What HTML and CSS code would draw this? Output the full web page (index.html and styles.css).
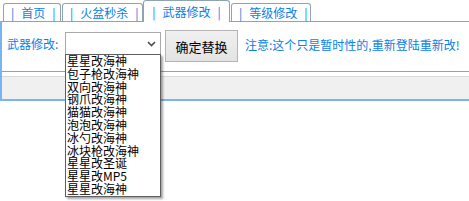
FILE: index.html
```html
<!DOCTYPE html>
<html lang="zh">
<head>
    <meta charset="UTF-8">
    <title>武器修改</title>
    <link rel="stylesheet" href="styles.css">
</head>
<body>
    <div class="tabs">
        <div class="tab tab-1"><span class="bar">|</span>首页<span class="bar">|</span></div>
        <div class="tab tab-2"><span class="bar">|</span>火盆秒杀<span class="bar">|</span></div>
        <div class="tab tab-3 active"><span class="bar">|</span>武器修改<span class="bar">|</span></div>
        <div class="tab tab-4"><span class="bar">|</span>等级修改<span class="bar">|</span></div>
    </div>

    <div class="panel">
        <div class="form-row">
            <label class="field-label">武器修改:</label>
            <div class="select-wrap">
                <div class="select">
                    <svg class="chevron" width="9" height="6" viewBox="0 0 9 6">
                        <path d="M1 1 L4.5 4.5 L8 1" fill="none" stroke="#4d4d4d" stroke-width="1.6"/>
                    </svg>
                </div>
                <ul class="dropdown">
                    <li>星星改海神</li>
                    <li>包子枪改海神</li>
                    <li>双向改海神</li>
                    <li>钢爪改海神</li>
                    <li>猫猫改海神</li>
                    <li>泡泡改海神</li>
                    <li>冰勺改海神</li>
                    <li>冰块枪改海神</li>
                    <li>星星改圣诞</li>
                    <li>星星改MP5</li>
                    <li>星星改海神</li>
                </ul>
            </div>
            <button class="btn">确定替换</button>
            <span class="note">注意:这个只是暂时性的,重新登陆重新改!</span>
        </div>
        <div class="footer">
            <div class="footer-bar"></div>
        </div>
    </div>
</body>
</html>
```

FILE: styles.css
```css
* {
    margin: 0;
    padding: 0;
    box-sizing: border-box;
    font-family: 'Noto Sans CJK SC', 'Liberation Sans', sans-serif;
}

:root {
    --blue-text: #0a7fe6;
    --tab-line: #8fa4b1;
    --panel-blue: #78b4f0;
}

html, body {
    min-height: 100vh;
}

body {
    background: #ffffff;
    font-size: 12px;
}

/* 选项卡 */
.tabs {
    display: flex;
    align-items: flex-end;
    height: 21px;
    padding-left: 3px;
    gap: 1px;
}

.tab {
    height: 18px;
    border: 1px solid var(--tab-line);
    border-bottom: none;
    border-radius: 3px 3px 0 0;
    color: var(--blue-text);
    font-size: 12px;
    line-height: 17px;
    text-align: center;
    white-space: nowrap;
    background: #ffffff;
}

.tab .bar {
    margin: 0 7px;
}

.tab-1 { width: 58px; }
.tab-2 { width: 81px; }
.tab-3 { width: 87px; margin-left: -1px; }
.tab-4 { width: 80px; }

.tab.active {
    height: 22px;
    margin-bottom: -1px;
    line-height: 21px;
    position: relative;
    z-index: 1;
}

/* 主面板 */
.panel {
    border-top: 1px solid var(--tab-line);
    border-left: 2px solid var(--panel-blue);
    border-bottom: 2px solid var(--panel-blue);
}

.form-row {
    display: flex;
    align-items: flex-start;
    height: 50px;
    padding: 8px 0 0 5px;
    border-bottom: 1px solid var(--tab-line);
}

.field-label {
    color: var(--blue-text);
    font-size: 12px;
    line-height: 16px;
    margin-top: 6px;
    width: 58px;
}

.select-wrap {
    position: relative;
    margin-top: 2px;
}

.select {
    width: 96px;
    height: 23px;
    border: 1px solid #a9a9a9;
    background: #ffffff;
    display: flex;
    align-items: center;
    justify-content: flex-end;
    padding-right: 4px;
}

.chevron {
    display: block;
}

/* 展开的下拉列表 */
.dropdown {
    position: absolute;
    top: 22px;
    left: 0;
    width: 96px;
    list-style: none;
    background: #ffffff;
    border: 1px solid #5e5e5e;
    box-shadow: 2px 2px 2px rgba(0, 0, 0, 0.35);
    z-index: 5;
}

.dropdown li {
    font-size: 12px;
    line-height: 12.8px;
    height: 12.8px;
    padding-left: 1px;
    color: #000000;
    white-space: nowrap;
}

.btn {
    width: 73px;
    height: 32px;
    margin-left: 4px;
    border: 1px solid #b4b4b4;
    background: linear-gradient(#f0f0f0, #e3e3e3);
    color: #000000;
    font-size: 13px;
}

.note {
    color: var(--blue-text);
    font-size: 12px;
    line-height: 16px;
    margin-top: 7px;
    margin-left: 7px;
    white-space: nowrap;
}

/* 底部灰条 */
.footer {
    padding-top: 4px;
}

.footer-bar {
    height: 23px;
    border-top: 1px solid #d9d9d9;
    background: #f0f0f0;
}
```
